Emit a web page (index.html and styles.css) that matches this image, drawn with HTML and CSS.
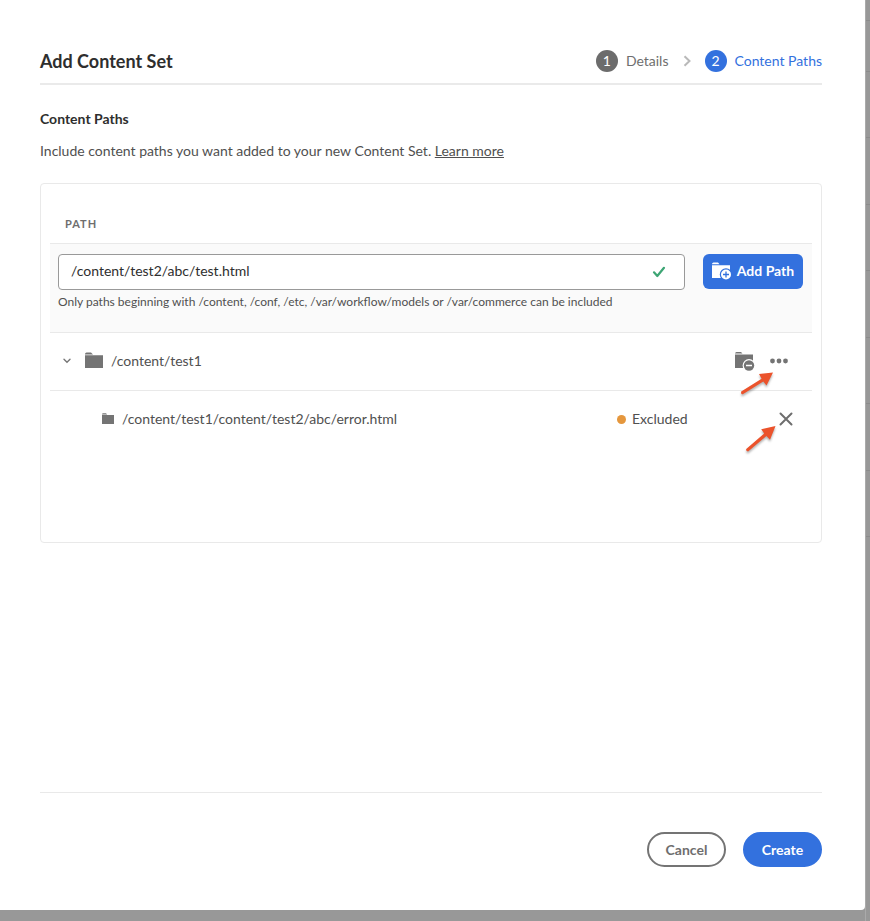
FILE: index.html
```html
<!DOCTYPE html>

<html lang="en">

<head>
	<meta charset="UTF-8" />
	<meta name="viewport" content="width=device-width, initial-scale=1" />
	<title>Add Content Set</title>
	<link rel="stylesheet" href="styles.css">
</head>

<body>
	<main class="dialog">
		<header class="dialog-header">
			<h1>Add Content Set</h1>
			<ol class="steps">
				<li class="step"><span class="step-number">1</span>Details</li>
				<li class="step-separator" aria-hidden="true">
					<svg width="8" height="12" viewBox="0 0 8 12"><path d="M1.5 1.2 6.5 6l-5 4.8" fill="none" stroke="#b9b9b9" stroke-width="2" /></svg>
				</li>
				<li class="step step-current" aria-current="step"><span class="step-number">2</span>Content Paths</li>
			</ol>
		</header>

		<h2>Content Paths</h2>
		<p class="intro">Include content paths you want added to your new Content Set. <a href="#">Learn more</a></p>

		<section class="card">
			<table class="paths">
				<thead>
					<tr><th colspan="3" scope="col"><label for="path">PATH</label></th></tr>
				</thead>
				<tbody>
					<tr class="add-row">
						<td colspan="3">
							<form class="add-form">
								<div class="path-field">
									<input type="text" id="path" name="path" value="/content/test2/abc/test.html" aria-describedby="path-help" />
									<svg width="14" height="12" viewBox="0 0 14 12" aria-hidden="true"><path d="M2 6.3 5.3 10 12 1.8" fill="none" stroke="#3da574" stroke-width="2.2" stroke-linecap="round" stroke-linejoin="round" /></svg>
								</div>
								<button type="button" class="add-button">
									<svg width="20" height="18" viewBox="0 0 20 18" aria-hidden="true">
										<path d="M0 2Q.2.5 1.5.5H6L7.5 2.3H0zM0 3.3h18V16H0z" fill="#fff" />
										<circle cx="14" cy="12.5" r="6.2" fill="#3371de" />
										<circle cx="14" cy="12.5" r="5" fill="#fff" />
										<path d="M14 9.5v6M11 12.5h6" stroke="#3371de" stroke-width="1.3" />
									</svg>
									Add Path
								</button>
							</form>
							<p class="help" id="path-help">Only paths beginning with /content, /conf, /etc, /var/workflow/models or /var/commerce can be included</p>
						</td>
					</tr>
					<tr class="path-row">
						<td>
							<div class="path-name">
								<button type="button" class="icon-button" aria-label="Collapse">
									<svg width="8" height="6" viewBox="0 0 8 6"><path d="M1 1.2 4 4.2l3-3" fill="none" stroke="#777" stroke-width="1.4" stroke-linecap="round" /></svg>
								</button>
								<svg class="folder" width="18" height="16" viewBox="0 0 18 16" aria-hidden="true"><path d="M0 2Q.2.5 1.5.5H6L8 2.6H0zM0 3.2h18V16H0z" fill="#747474" /></svg>
								/content/test1
							</div>
						</td>
						<td class="status"></td>
						<td class="actions">
							<div class="action-list">
								<button type="button" class="icon-button" aria-label="Exclude path">
									<svg width="20" height="20" viewBox="0 0 20 20">
										<path d="M0 2.5Q.2 1 1.5 1H6L7.5 2.5H0zM0 3.5h18V17H0z" fill="#747474" />
										<circle cx="14" cy="14.5" r="6.4" fill="#fff" />
										<circle cx="14" cy="14.5" r="5.2" fill="#747474" />
										<path d="M11 14.5h6" stroke="#fff" stroke-width="1.5" />
									</svg>
								</button>
								<button type="button" class="icon-button" aria-label="More actions">
									<svg width="18" height="6" viewBox="0 0 18 6" fill="#747474"><circle cx="2.5" cy="3" r="2.4" /><circle cx="9" cy="3" r="2.4" /><circle cx="15.5" cy="3" r="2.4" /></svg>
								</button>
							</div>
							<svg class="pointer pointer-more" width="38" height="30" viewBox="0 0 38 30" aria-hidden="true"><path d="M2.2 23.5 22.6 10.8 20 6 34 4.5 27.5 17.5 24.3 13.5 3.8 26.2Q1.6 26.5 2.2 23.5z" fill="#eb532c" /></svg>
						</td>
					</tr>
					<tr class="path-row child-row">
						<td>
							<div class="path-name">
								<svg class="folder" width="12" height="11" viewBox="0 0 12 11" aria-hidden="true"><path d="M0 1.2Q.2.2 1 .2h3L5.2 1.5H0zM0 2.1h12V11H0z" fill="#747474" /></svg>
								/content/test1/content/test2/abc/error.html
							</div>
						</td>
						<td class="status"><span class="status-dot"></span>Excluded</td>
						<td class="actions">
							<div class="action-list">
								<button type="button" class="icon-button" aria-label="Remove">
									<svg width="14" height="14" viewBox="0 0 14 14"><path d="M1.5 1.5l11 11M12.5 1.5l-11 11" stroke="#6e6e6e" stroke-width="2" stroke-linecap="round" /></svg>
								</button>
							</div>
							<svg class="pointer pointer-remove" width="36" height="34" viewBox="0 0 36 34" aria-hidden="true"><path d="M2.2 27 20.2 11.6 17.2 7.2 31.5 4 26 17.8 22.4 14 4.1 29.6Q1.7 29.5 2.2 27z" fill="#eb532c" /></svg>
						</td>
					</tr>
				</tbody>
			</table>
		</section>

		<footer class="dialog-footer">
			<button type="button" class="pill">Cancel</button>
			<button type="button" class="pill pill-primary">Create</button>
		</footer>
	</main>

	<!-- edge of the list page behind the dialog -->
	<div class="backdrop" aria-hidden="true">
		<div class="backdrop-bar"></div>
		<div class="backdrop-head"></div>
		<div class="backdrop-row"></div>
		<div class="backdrop-row"></div>
		<div class="backdrop-row"></div>
		<div class="backdrop-row"></div>
		<div class="backdrop-row"></div>
		<div class="backdrop-row"></div>
		<div class="backdrop-row"></div>
	</div>
</body>

</html>
```

FILE: styles.css
```css
* {
	box-sizing: border-box;
}

body {
	margin: 0;
	min-height: 100vh;
	display: flex;
	font-family: Lato, "Noto Sans", sans-serif;
	font-size: 14px;
	line-height: 20px;
	color: #505050;
	background-color: #989898;
}

h1, h2, p, ol {
	margin: 0;
	padding: 0;
}

a {
	color: inherit;
}

button, input {
	font: inherit;
	color: inherit;
}

svg {
	display: block;
	flex: none;
}

.dialog {
	flex: 1;
	display: flex;
	flex-direction: column;
	margin-bottom: 11px;
	padding: 48px 43px 43px 40px;
	background-color: #fff;
	border-bottom-right-radius: 4px;
}

.dialog-header {
	display: flex;
	justify-content: space-between;
	align-items: center;
	height: 37px;
	padding-bottom: 9px;
	border-bottom: 2px solid #eaeaea;
}

h1 {
	font-size: 18px;
	line-height: 26px;
	color: #2e2e2e;
}

.steps {
	display: flex;
	align-items: center;
	gap: 14px;
	list-style: none;
}

.step {
	display: flex;
	align-items: center;
	gap: 8px;
	color: #6e6e6e;
}

.step-number {
	width: 22px;
	height: 22px;
	border-radius: 50%;
	line-height: 22px;
	text-align: center;
	color: #fff;
	background-color: #6c6c6c;
}

.step-current {
	color: #3371de;
}

.step-current .step-number {
	background-color: #3371de;
}

h2 {
	margin-top: 24px;
	font-size: 14px;
	line-height: 20px;
	color: #2e2e2e;
}

.intro {
	margin-top: 12px;
}

.card {
	min-height: 360px;
	margin-top: 22px;
	padding: 22px 9px;
	border: 1px solid #e9e9e9;
	border-radius: 4px;
}

.paths {
	width: 100%;
	border-collapse: collapse;
}

.paths th, .paths td {
	padding: 0;
	text-align: left;
}

.paths th {
	height: 37px;
	padding: 0 15px;
	font-size: 11px;
	color: #6e6e6e;
	letter-spacing: 1px;
}

.paths tr {
	border-bottom: 1px solid #e9e9e9;
}

.paths tr:last-child {
	border-bottom: 0;
}

.paths thead tr:last-child {
	border-bottom: 1px solid #e9e9e9;
}

.add-row {
	background-color: #fafafa;
}

.paths .add-row td {
	height: 89px;
	padding: 10px 9px 0 8px;
	vertical-align: top;
}

.add-form {
	display: flex;
	gap: 18px;
}

.path-field {
	flex: 1;
	display: flex;
	align-items: center;
	height: 36px;
	padding: 0 18px 0 12px;
	border: 1px solid #999;
	border-radius: 4px;
	background-color: #fff;
}

.path-field input {
	flex: 1;
	min-width: 0;
	height: 32px;
	padding: 0 0 2px;
	border: 0;
	outline: 0;
	color: #2e2e2e;
	background: none;
}

.add-button {
	display: flex;
	align-items: center;
	justify-content: center;
	gap: 5px;
	width: 100px;
	height: 35px;
	padding: 0;
	border: 0;
	border-radius: 6px;
	font-weight: bold;
	color: #fff;
	background-color: #3371de;
}

.help {
	margin-top: 2px;
	font-size: 12px;
}

.path-row td {
	height: 58px;
}

.path-name {
	display: flex;
	align-items: center;
	padding-left: 13px;
}

.child-row .path-name {
	padding-left: 52px;
}

.folder {
	margin: 0 8px 2px 14px;
}

.child-row .folder {
	margin-left: 0;
}

.icon-button {
	padding: 0;
	border: 0;
	background: none;
}

.status {
	width: 118px;
}

.status-dot {
	display: inline-block;
	width: 9px;
	height: 9px;
	margin-right: 6px;
	border-radius: 50%;
	background-color: #e5973d;
}

.actions {
	position: relative;
	width: 77px;
}

.action-list {
	display: flex;
	align-items: center;
	gap: 15px;
}

.child-row .action-list {
	padding-left: 44px;
}

/* arrows drawn over the row actions */
.pointer {
	position: absolute;
	filter: drop-shadow(0 2px 1px rgba(0, 0, 0, 0.3));
}

.pointer-more {
	top: 35px;
	left: 4px;
}

.pointer-remove {
	top: 31px;
	left: 9px;
}

.dialog-footer {
	display: flex;
	justify-content: flex-end;
	gap: 17px;
	margin-top: auto;
	padding-top: 39px;
	border-top: 1px solid #e9e9e9;
}

.pill {
	width: 79px;
	height: 35px;
	padding: 0;
	border: 2px solid #747474;
	border-radius: 18px;
	font-weight: bold;
	color: #6e6e6e;
	background-color: #fff;
}

.pill-primary {
	border-color: #3371de;
	color: #fff;
	background-color: #3371de;
}

.backdrop {
	width: 5px;
	border-left: 1px solid #aaa;
}

.backdrop div {
	border-bottom: 1px solid #8b8b8b;
}

.backdrop-bar {
	height: 21px;
}

.backdrop-head {
	height: 51px;
}

.backdrop-row {
	height: 66px;
}

.backdrop-row:nth-child(even) {
	height: 67px;
}
```
